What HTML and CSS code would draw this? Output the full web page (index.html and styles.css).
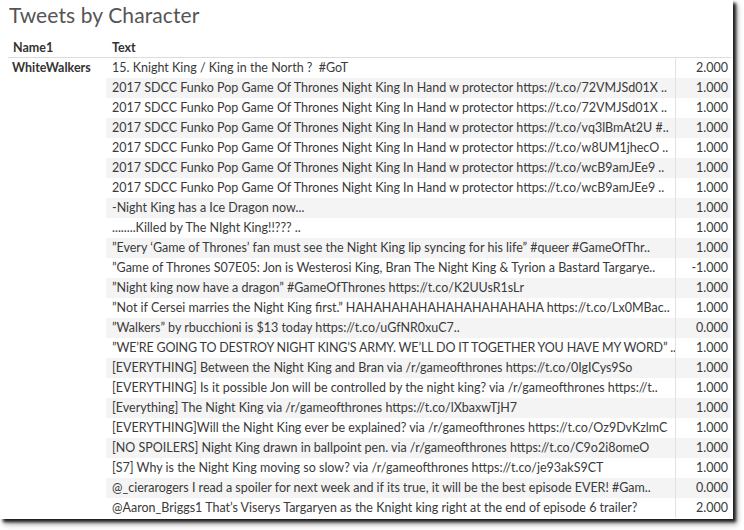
FILE: index.html
```html
<!DOCTYPE html>
<html>
<head>
<meta charset="utf-8">
<link rel="stylesheet" href="styles.css">
</head>
<body>
<div class="sheet">
  <h1 class="title">Tweets by Character</h1>
  <div class="table">
    <div class="hdr name">Name1</div>
    <div class="hdr text">Text</div>
    <div class="hdr num"></div>
    <div class="rows-name">WhiteWalkers</div>
    <div class="rows">
      <div class="row"><div class="t">15. Knight King / King in the North ?&nbsp; #GoT</div><div class="n">2.000</div></div>
      <div class="row"><div class="t">2017 SDCC Funko Pop Game Of Thrones Night King In Hand w protector https://t.co/72VMJSd01X ..</div><div class="n">1.000</div></div>
      <div class="row"><div class="t">2017 SDCC Funko Pop Game Of Thrones Night King In Hand w protector https://t.co/72VMJSd01X ..</div><div class="n">1.000</div></div>
      <div class="row"><div class="t">2017 SDCC Funko Pop Game Of Thrones Night King In Hand w protector https://t.co/vq3lBmAt2U #..</div><div class="n">1.000</div></div>
      <div class="row"><div class="t">2017 SDCC Funko Pop Game Of Thrones Night King In Hand w protector https://t.co/w8UM1jhecO ..</div><div class="n">1.000</div></div>
      <div class="row"><div class="t">2017 SDCC Funko Pop Game Of Thrones Night King In Hand w protector https://t.co/wcB9amJEe9 ..</div><div class="n">1.000</div></div>
      <div class="row"><div class="t">2017 SDCC Funko Pop Game Of Thrones Night King In Hand w protector https://t.co/wcB9amJEe9 ..</div><div class="n">1.000</div></div>
      <div class="row"><div class="t">-Night King has a Ice Dragon now...</div><div class="n">1.000</div></div>
      <div class="row"><div class="t">........Killed by The NIght King!!??? ..</div><div class="n">1.000</div></div>
      <div class="row"><div class="t">”Every ‘Game of Thrones’ fan must see the Night King lip syncing for his life” #queer #GameOfThr..</div><div class="n">1.000</div></div>
      <div class="row"><div class="t">”Game of Thrones S07E05: Jon is Westerosi King, Bran The Night King &amp; Tyrion a Bastard Targarye..</div><div class="n">-1.000</div></div>
      <div class="row"><div class="t">”Night king now have a dragon” #GameOfThrones https://t.co/K2UUsR1sLr</div><div class="n">1.000</div></div>
      <div class="row"><div class="t">”Not if Cersei marries the Night King first.” HAHAHAHAHAHAHAHAHAHAHA https://t.co/Lx0MBac..</div><div class="n">1.000</div></div>
      <div class="row"><div class="t">”Walkers” by rbucchioni is $13 today https://t.co/uGfNR0xuC7..</div><div class="n">0.000</div></div>
      <div class="row"><div class="t tight">”WE’RE GOING TO DESTROY NIGHT KING’S ARMY. WE’LL DO IT TOGETHER YOU HAVE MY WORD” ..</div><div class="n">1.000</div></div>
      <div class="row"><div class="t">[EVERYTHING] Between the Night King and Bran via /r/gameofthrones https://t.co/0IgICys9So</div><div class="n">1.000</div></div>
      <div class="row"><div class="t">[EVERYTHING] Is it possible Jon will be controlled by the night king? via /r/gameofthrones https://t..</div><div class="n">1.000</div></div>
      <div class="row"><div class="t">[Everything] The Night King via /r/gameofthrones https://t.co/lXbaxwTjH7</div><div class="n">1.000</div></div>
      <div class="row"><div class="t">[EVERYTHING]Will the Night King ever be explained? via /r/gameofthrones https://t.co/Oz9DvKzlmC</div><div class="n">1.000</div></div>
      <div class="row"><div class="t">[NO SPOILERS] Night King drawn in ballpoint pen. via /r/gameofthrones https://t.co/C9o2i8omeO</div><div class="n">1.000</div></div>
      <div class="row"><div class="t">[S7] Why is the Night King moving so slow? via /r/gameofthrones https://t.co/je93akS9CT</div><div class="n">1.000</div></div>
      <div class="row"><div class="t">@_cierarogers I read a spoiler for next week and if its true, it will be the best episode EVER! #Gam..</div><div class="n">0.000</div></div>
      <div class="row"><div class="t">@Aaron_Briggs1 That’s Viserys Targaryen as the Knight king right at the end of episode 6 trailer?</div><div class="n">2.000</div></div>
    </div>
  </div>
</div>
</body>
</html>
```

FILE: styles.css
```css
html, body {
  margin: 0;
  padding: 0;
  background: #ffffff;
}
body {
  width: 744px;
  height: 530px;
  overflow: hidden;
  font-family: "Lato", "Open Sans", sans-serif;
}
.sheet {
  width: 733px;
  height: 519px;
  background: #ffffff;
  box-shadow: 3px 3px 3px rgba(0, 0, 0, 0.85), 4px 5px 6px rgba(0, 0, 0, 0.35);
  overflow: hidden;
}
.title {
  margin: 0;
  padding: 2px 0 0 9px;
  height: 38px;
  box-sizing: border-box;
  font-size: 21px;
  font-weight: normal;
  color: #555555;
  line-height: 26px;
  letter-spacing: 0.1px;
}
.table {
  display: grid;
  grid-template-columns: 98px 569px 56px;
  grid-template-rows: 20px auto;
  margin-left: 8px;
  width: 725px;
}
.hdr {
  font-size: 12.5px;
  font-weight: bold;
  color: #333333;
  line-height: 20px;
  border-bottom: 1px solid #dcdcdc;
  box-sizing: border-box;
  height: 20px;
}
.hdr.name { padding-left: 5px; }
.hdr.text { padding-left: 6px; }
.rows-name {
  font-size: 12.5px;
  font-weight: bold;
  color: #333333;
  line-height: 20px;
  padding-left: 4px;
}
.rows {
  grid-column: 2 / 4;
  display: flex;
  flex-direction: column;
}
.row {
  display: grid;
  grid-template-columns: 569px 56px;
  height: 20px;
  font-size: 12.5px;
  line-height: 20px;
  color: #3a3a3a;
}
.row:nth-child(even) {
  background: #f4f4f4;
}
.t {
  padding-left: 6px;
  white-space: nowrap;
  overflow: hidden;
}
.t.tight {
  letter-spacing: -0.17px;
}
.n {
  border-left: 1px solid #e2e2e2;
  text-align: right;
  padding-right: 3px;
}
```
